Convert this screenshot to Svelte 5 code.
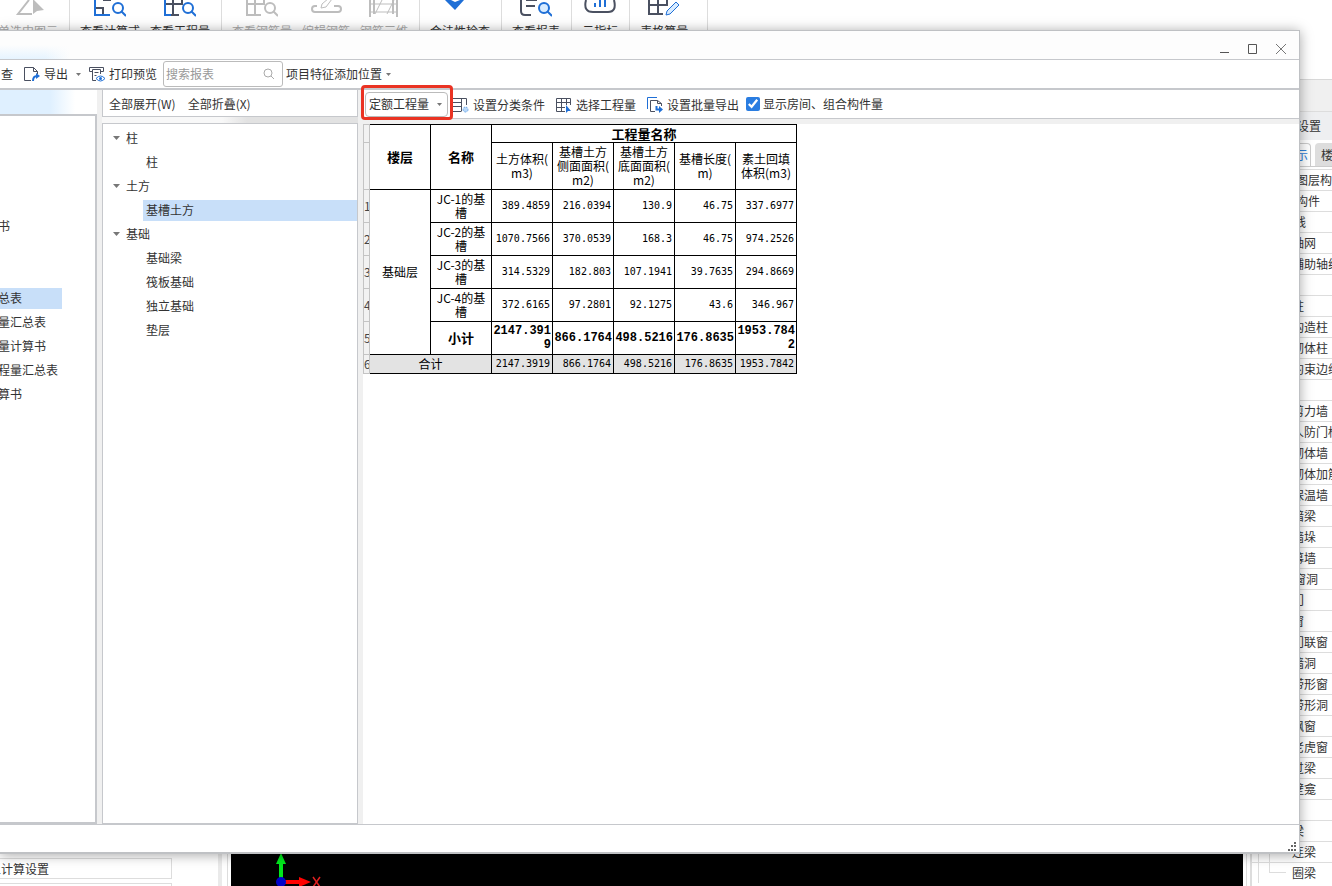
<script lang="ts">
	const ribbon = [
		{ items: [{ label: '单选中图元', icon: 'select', off: true }] },
		{
			items: [
				{ label: '查看计算式', icon: 'formula', off: false },
				{ label: '查看工程量', icon: 'grid', off: false }
			]
		},
		{
			items: [
				{ label: '查看钢筋量', icon: 'grid', off: true },
				{ label: '编辑钢筋', icon: 'edit', off: true },
				{ label: '钢筋三维', icon: 'rebar', off: true }
			]
		},
		{ items: [{ label: '合法性检查', icon: 'check', off: false }] },
		{ items: [{ label: '查看报表', icon: 'report', off: false }] },
		{ items: [{ label: '云指标', icon: 'cloud', off: false }] },
		{ items: [{ label: '表格算量', icon: 'sheet', off: false }] }
	];

	const reports = ['', '', '', '', '书', '', '', '总表', '量汇总表', '量计算书', '程量汇总表', '算书'];

	const tree = [
		{ name: '柱', children: ['柱'] },
		{ name: '土方', children: ['基槽土方'] },
		{ name: '基础', children: ['基础梁', '筏板基础', '独立基础', '垫层'] }
	];

	const layers = [
		{ name: '所有图层构件', level: 0 },
		{ name: '所有构件', level: 0 },
		{ name: '轴线', level: 1 },
		{ name: '轴网', level: 2 },
		{ name: '辅助轴线', level: 2 },
		{ name: '柱', level: 1 },
		{ name: '柱', level: 2 },
		{ name: '构造柱', level: 2 },
		{ name: '砌体柱', level: 2 },
		{ name: '约束边缘', level: 2 },
		{ name: '墙', level: 1 },
		{ name: '剪力墙', level: 2 },
		{ name: '人防门框', level: 2 },
		{ name: '砌体墙', level: 2 },
		{ name: '砌体加筋', level: 2 },
		{ name: '保温墙', level: 2 },
		{ name: '暗梁', level: 2 },
		{ name: '墙垛', level: 2 },
		{ name: '幕墙', level: 2 },
		{ name: '门窗洞', level: 1 },
		{ name: '门', level: 2 },
		{ name: '窗', level: 2 },
		{ name: '门联窗', level: 2 },
		{ name: '墙洞', level: 2 },
		{ name: '带形窗', level: 2 },
		{ name: '带形洞', level: 2 },
		{ name: '飘窗', level: 2 },
		{ name: '老虎窗', level: 2 },
		{ name: '过梁', level: 2 },
		{ name: '壁龛', level: 2 },
		{ name: '梁', level: 1 },
		{ name: '梁', level: 2 },
		{ name: '连梁', level: 2 },
		{ name: '圈梁', level: 2 }
	];

	const columns = [
		['土方体积(', 'm3)'],
		['基槽土方', '侧面面积(', 'm2)'],
		['基槽土方', '底面面积(', 'm2)'],
		['基槽长度(', 'm)'],
		['素土回填', '体积(m3)']
	];

	const rows = [
		{ name: ['JC-1的基', '槽'], values: ['389.4859', '216.0394', '130.9', '46.75', '337.6977'] },
		{ name: ['JC-2的基', '槽'], values: ['1070.7566', '370.0539', '168.3', '46.75', '974.2526'] },
		{ name: ['JC-3的基', '槽'], values: ['314.5329', '182.803', '107.1941', '39.7635', '294.8669'] },
		{ name: ['JC-4的基', '槽'], values: ['372.6165', '97.2801', '92.1275', '43.6', '346.967'] }
	];
	const totals = ['2147.3919', '866.1764', '498.5216', '176.8635', '1953.7842'];

	let selectedReport = $state('总表');
	let selectedNode = $state('基槽土方');
	let showRooms = $state(true);
</script>

{#snippet ribbonIcon(icon: string, off: boolean)}
	{@const dark = off ? '#bdbdbd' : '#4a5060'}
	{@const blue = off ? '#bdbdbd' : '#1f6fd6'}
	<svg width="32" height="18" viewBox="0 0 32 18" fill="none" stroke={dark} stroke-width="2">
		{#if icon === 'select'}
			<path d="M17 0 6 14h14" />
			<path d="M21 0v14l4-3 7-1L21-1z" fill={dark} stroke="none" />
		{:else if icon === 'formula'}
			<path d="M2 8h7v7M9 0h8" />
			<path d="M1 0v15h15" stroke={blue} />
			<circle cx="24" cy="8" r="5" stroke={blue} />
			<path d="m27 11 5 5" stroke={blue} />
		{:else if icon === 'grid'}
			<path d="M1 4h17V0M9 0v15M1 15h14" />
			<path d="M1 0v15h6" stroke={blue} />
			<circle cx="24" cy="8" r="5" stroke={blue} />
			<path d="m27 11 5 5" stroke={blue} />
		{:else if icon === 'edit'}
			<path d="M7 6H5a3 3 0 0 0 0 6h23a3 3 0 0 0 0-6h-4" />
			<path d="m11 8 1-4 7-6M11 8l5-1 6-8" stroke-width="1" />
		{:else if icon === 'rebar'}
			<path d="M2 0v17M6 0v14M25 0v14M29 0v17" />
			<path d="M2 4h27M2 12h27M7 14l7-14M19 14l7-14" stroke-width="1" />
		{:else if icon === 'check'}
			<path d="M1 0h6l4 2 5-2h4L11 10z" fill={blue} stroke="none" />
		{:else if icon === 'report'}
			<path d="M1 0v11q0 4 4 4h6M6 6h9M6 0h11" />
			<circle cx="24" cy="8" r="5" stroke={blue} fill="#d9ecff" />
			<path d="m27 11 5 5" stroke={blue} />
		{:else if icon === 'cloud'}
			<path d="M2 0q-3 12 7 12h15Q33 12 30 0" />
			<path d="M11 3v4M16 0v7M21 0v7" stroke={blue} />
		{:else}
			<path d="M1 0v14h14M10 0v14M1 5h18V0" />
			<path d="m18 15 1-4 9-9 3 3-9 9z" stroke={blue} stroke-width="1" fill="#d9ecff" />
		{/if}
	</svg>
{/snippet}

{#snippet caret()}
	<svg class="caret" width="5" height="3" viewBox="0 0 5 3"><path d="M0 0h5L2.500 3z" fill="#777" /></svg>
{/snippet}

<div class="screen">
	<header class="ribbon">
		{#each ribbon as group}
			<div class="group">
				{#each group.items as item}
					<button class="tool" class:off={item.off} disabled={item.off}>
						{@render ribbonIcon(item.icon, item.off)}
						<span>{item.label}</span>
					</button>
				{/each}
			</div>
		{/each}
	</header>

	<div class="desk">
		<aside class="settings">
			<button>土计算设置</button>
			<button aria-label="更多设置"></button>
		</aside>
		<div class="canvas">
			<svg width="100" height="34" viewBox="0 0 100 34">
				<path d="M50 26V10" stroke="#00e71c" stroke-width="4" />
				<path d="M45 12 50 1l5 11z" fill="#00e71c" />
				<path d="M54 30h16" stroke="#f00" stroke-width="4" />
				<path d="m68 25 12 5-12 5z" fill="#f00" />
				<circle cx="50" cy="30" r="5" fill="#0000c8" />
				<path d="m82 25 7 10M89 25l-7 10" stroke="#e02020" stroke-width="1.500" />
			</svg>
		</div>
		<aside class="layers">
			<div class="band"></div>
			<div class="heading">显示设置</div>
			<div class="tabs">
				<button class="active">图元显示</button>
				<button>楼层显示</button>
			</div>
			<ul>
				{#each layers as layer}
					<li class="level{layer.level}">{layer.name}</li>
				{/each}
			</ul>
		</aside>
	</div>

	<section class="window">
		<div class="titlebar">
			<button aria-label="最小化">
				<svg width="12" height="12" viewBox="0 0 12 12"><path d="M1 9.500h9" stroke="#555" /></svg>
			</button>
			<button aria-label="最大化">
				<svg width="12" height="12" viewBox="0 0 12 12"><path d="M1.500 1.500h8v9h-8z" fill="none" stroke="#555" /></svg>
			</button>
			<button aria-label="关闭">
				<svg width="12" height="12" viewBox="0 0 12 12"><path d="m1 1 10 10M11 1 1 11" stroke="#777" /></svg>
			</button>
		</div>

		<div class="toolbar">
			<button class="cut">查</button>
			<button class="export">
				<svg width="16" height="16" viewBox="0 0 16 16" fill="none">
					<path d="M7 14.500H.5V1.500h9l4 4V8M9.500 1.500v4h4" stroke="#4a5060" />
					<path d="M9 15q0-5 4-5" stroke="#1f6fd6" stroke-width="2" />
					<path d="m12 7 4 3-4 3z" fill="#1f6fd6" />
				</svg>
				导出
				{@render caret()}
			</button>
			<button>
				<svg width="16" height="16" viewBox="0 0 16 16" fill="none">
					<path d="M3 5.500H.5v-4h14v4H12M3.500 14.500v-11h8V8M3.500 14.500H7M5.500 6.500h4M5.500 9.500h2" stroke="#4a5060" />
					<path d="M7 12.500q4.500-5 9 0q-4.500 5-9 0z" fill="#fff" stroke="#1f6fd6" />
					<circle cx="11.500" cy="12.500" r="1.500" fill="#1f6fd6" />
				</svg>
				打印预览
			</button>
			<label class="search">
				<input type="text" placeholder="搜索报表" aria-label="搜索报表" />
				<svg width="12" height="12" viewBox="0 0 12 12" fill="none" stroke="#aaa">
					<circle cx="5" cy="5" r="4" />
					<path d="m8 8 3 3" />
				</svg>
			</label>
			<button class="position">项目特征添加位置 {@render caret()}</button>
		</div>

		<div class="main">
			<nav class="reports">
				<ul>
					{#each reports as report}
						<li>
							{#if report}
								<button class:selected={report === selectedReport} onclick={() => (selectedReport = report)}>{report}</button>
							{/if}
						</li>
					{/each}
				</ul>
			</nav>

			<div class="outline">
				<div class="fold">
					<button>全部展开(W)</button>
					<button>全部折叠(X)</button>
				</div>
				<ul class="tree">
					{#each tree as node}
						<li>
							<button class="parent">
								<svg width="7" height="5" viewBox="0 0 7 5"><path d="M0 0h7L3.500 4z" fill="#777" /></svg>
								{node.name}
							</button>
						</li>
						{#each node.children as child}
							<li>
								<button class="child" class:selected={child === selectedNode} onclick={() => (selectedNode = child)}>{child}</button>
							</li>
						{/each}
					{/each}
				</ul>
			</div>

			<div class="content">
				<div class="options">
					<div class="picker">
						<select aria-label="工程量类型">
							<option>定额工程量</option>
							<option>清单工程量</option>
						</select>
						{@render caret()}
						<span class="mark"></span>
					</div>
					<button>
						<svg width="16" height="16" viewBox="0 0 16 16" fill="none">
							<path d="M0 1.500h13.500V8M0 5.500h8M0 9.500h8M0 14.500h8M8.500 1.500v13" stroke="#4a5060" />
							<circle cx="12.500" cy="12.500" r="2.500" fill="#b8d8fa" stroke="#6fa8e8" stroke-dasharray="2 1" />
						</svg>
						设置分类条件
					</button>
					<button>
						<svg width="16" height="16" viewBox="0 0 16 16" fill="none">
							<path d="M9 14.500H.5v-13h14V8M.5 5.500h14M.5 10.500H9M5.500 1.500v13M10.500 1.500V8" stroke="#4a5060" />
							<path d="M10 8v8l2-2 3 0z" fill="#1f6fd6" />
						</svg>
						选择工程量
					</button>
					<button>
						<svg width="16" height="16" viewBox="0 0 16 16" fill="none">
							<path d="M.5 12V.5H10" stroke="#1f6fd6" />
							<path d="M8 14.500H3.500V3.500h7l4 3V9M10.500 3.500v3h4" stroke="#4a5060" />
							<path d="M9.500 9v3.500H13" stroke="#1f6fd6" stroke-width="2" />
							<path d="m12 9 4 3.500-4 3.500z" fill="#1f6fd6" />
						</svg>
						设置批量导出
					</button>
					<label class="tick">
						<input type="checkbox" bind:checked={showRooms} />
						显示房间、组合构件量
					</label>
				</div>

				<div class="sheet">
					<table>
						<colgroup>
							<col class="narrow" />
							<col span="7" />
						</colgroup>
						<tbody>
							<tr class="top">
								<td class="num"></td>
								<th rowspan="2">楼层</th>
								<th rowspan="2">名称</th>
								<th colspan="5">工程量名称</th>
							</tr>
							<tr class="units">
								<td class="num"></td>
								{#each columns as lines}
									<td>
										{#each lines as line}<div>{line}</div>{/each}
									</td>
								{/each}
							</tr>
							{#each rows as row, i}
								<tr>
									<td class="num">{i + 1}</td>
									{#if i === 0}
										<td rowspan="5">基础层</td>
									{/if}
									<td>
										{#each row.name as line}<div>{line}</div>{/each}
									</td>
									{#each row.values as value}
										<td class="value">{value}</td>
									{/each}
								</tr>
							{/each}
							<tr class="subtotal">
								<td class="num">5</td>
								<th>小计</th>
								{#each totals as value}
									<td class="value">{value}</td>
								{/each}
							</tr>
							<tr class="total">
								<td class="num">6</td>
								<td colspan="2">合计</td>
								{#each totals as value}
									<td class="value">{value}</td>
								{/each}
							</tr>
						</tbody>
					</table>
				</div>
			</div>
		</div>

		<footer class="status">
			<svg width="10" height="10" viewBox="0 0 10 10" fill="#666">
				<path d="M7 0h2v2H7zM4 3h2v2H4zM7 3h2v2H7zM1 7h2v2H1zM4 7h2v2H4zM7 7h2v2H7z" />
			</svg>
		</footer>
	</section>
</div>

<style>
	:global(body) {
		margin: 0;
	}

	.screen {
		position: relative;
		display: flex;
		flex-direction: column;
		height: 100vh;
		overflow: hidden;
		background: #fff;
		color: #333;
		font: 12px/16px 'Noto Sans CJK SC', sans-serif;
	}

	ul {
		list-style: none;
		margin: 0;
		padding: 0;
	}

	button {
		display: flex;
		align-items: center;
		padding: 0;
		border: 0;
		background: none;
		color: inherit;
		font: inherit;
		white-space: nowrap;
	}

	svg {
		flex: none;
	}

	/* Main program, behind the report window */
	.ribbon {
		display: flex;
		flex: none;
		height: 79px;
		border-bottom: 1px solid #d8d8d8;
	}

	.group {
		display: flex;
		gap: 10px;
		padding: 0 11px 0 10px;
		border-right: 1px solid #ddd;
	}

	.group:first-child {
		padding-left: 0;
		margin-left: -2px;
	}

	.group:last-child {
		padding-right: 19px;
	}

	.tool {
		flex-direction: column;
		gap: 5px;
	}

	.tool.off {
		color: #aaa;
	}

	.desk {
		display: flex;
		flex: 1;
		min-height: 0;
	}

	.settings {
		display: flex;
		flex-direction: column;
		justify-content: flex-end;
		gap: 4px;
		width: 218px;
		margin-bottom: -18px;
		border-right: 4px solid #eaeaea;
	}

	.settings button {
		width: 172px;
		height: 21px;
		padding: 0;
		border: 1px solid #ddd;
		border-left: 0;
		text-indent: -11px;
	}

	.canvas {
		display: flex;
		flex: 1;
		align-items: flex-end;
		margin: 0 3px 0 5px;
		border: solid #ddd;
		border-width: 0 1px;
		padding: 0 3px;
		background: #000 content-box;
	}

	.layers {
		display: flex;
		flex-direction: column;
		width: 80px;
		border-left: 2px solid #ddd;
		overflow: hidden;
		white-space: nowrap;
	}

	.band {
		flex: none;
		height: 31px;
		border-bottom: 1px solid #ddd;
		background: #f0f0f0;
	}

	.heading {
		flex: none;
		padding: 6px 21px;
		background: #eeeff1;
	}

	.tabs {
		display: flex;
		flex: none;
		gap: 4px;
		padding-top: 3px;
		border-bottom: 1px solid #ccc;
	}

	.tabs button {
		height: 23px;
		padding-left: 6px;
		border-radius: 4px 4px 0 0;
		background: #ddd;
	}

	.tabs .active {
		padding: 0 2px 0 7px;
		border: 1px solid #ccc;
		border-bottom: 0;
		background: #fff;
		color: #2f80d8;
	}

	.layers ul {
		padding-top: 2px;
		background: linear-gradient(#ddd, #ddd) 6px 0 / 1px 100% no-repeat;
	}

	.layers li {
		position: relative;
		height: 20px;
		border-top: 1px solid #ddd;
		line-height: 20px;
	}

	.level0 {
		padding-left: 20px;
	}

	.level1 {
		padding-left: 30px;
	}

	.level2 {
		padding-left: 40px;
	}

	/* Branch line from the parent down to the item */
	.level2::before {
		position: absolute;
		top: -11px;
		left: 17px;
		width: 16px;
		height: 20px;
		border: solid #ddd;
		border-width: 0 0 1px 1px;
		content: '';
	}

	/* Report window */
	.window {
		position: absolute;
		inset: 30px 32px 32px 0;
		display: flex;
		flex-direction: column;
		box-sizing: border-box;
		border: solid #bfc1c4;
		border-width: 1px 1px 2px 0;
		background: #fff;
		box-shadow: 0 1px 12px rgba(0, 0, 0, 0.35);
	}

	.titlebar {
		display: flex;
		flex: none;
		justify-content: flex-end;
		align-items: center;
		gap: 16px;
		height: 28px;
		padding: 0 12px;
		border-bottom: 1px solid #c6c8cc;
		background: linear-gradient(#fdfdfd 14px, transparent), linear-gradient(90deg, #e6f4ff 45px, #fdfdfd 70px);
	}

	.titlebar button {
		padding-top: 8px;
	}

	.toolbar {
		display: flex;
		flex: none;
		align-items: center;
		height: 28px;
		border-bottom: 2px solid #c6c8cc;
	}

	.toolbar button {
		gap: 4px;
	}

	.toolbar .cut {
		width: 13px;
		justify-content: flex-end;
	}

	.toolbar .export {
		padding: 0 8px 0 11px;
	}

	.export .caret {
		margin-left: 4px;
	}

	.search {
		display: flex;
		align-items: center;
		box-sizing: border-box;
		width: 120px;
		height: 26px;
		margin: 0 3px 0 6px;
		padding: 0 7px 0 2px;
		border: 1px solid #bbb;
		border-radius: 3px;
	}

	.search input {
		flex: 1;
		min-width: 0;
		padding: 0;
		border: 0;
		outline: 0;
		font: inherit;
	}

	.search input::placeholder {
		color: #999;
	}

	.main {
		display: flex;
		flex: 1;
		min-height: 0;
		border-bottom: 1px solid #c6c8cc;
		background: #f0f0f0;
	}

	.reports {
		display: flex;
		width: 97px;
		box-sizing: border-box;
		padding-top: 24px;
		background: linear-gradient(90deg, #dff0ff 50px, #fff 75px);
	}

	.reports ul {
		flex: 1;
		border: solid #c6c8cc;
		border-width: 2px 2px 2px 0;
		background: #fff;
	}

	.reports ul,
	.tree {
		padding-top: 2px;
	}

	li button {
		height: 21px;
	}

	.reports li,
	.tree li {
		display: flex;
		align-items: center;
		height: 24px;
	}

	.reports button {
		margin-left: -2px;
	}

	.reports .selected {
		padding-right: 40px;
	}

	.selected {
		background: #c8dff9;
	}

	.outline {
		display: flex;
		flex-direction: column;
		gap: 6px;
		width: 256px;
		margin: 0 5px;
		background: linear-gradient(90deg, #f8f8f8 120px, #e2e2e2 145px);
	}

	.fold {
		display: flex;
		gap: 12px;
		height: 24px;
		padding: 2px 0 0 6px;
		border: 1px solid #c6c8cc;
		border-top-width: 0;
		background: #fff;
	}

	.tree {
		flex: 1;
		border: 1px solid #c6c8cc;
		background: #fff;
	}

	.tree .parent {
		gap: 6px;
		padding-left: 10px;
	}

	.tree .child {
		flex: 1;
		margin-left: 40px;
		padding-left: 3px;
	}

	.content {
		display: flex;
		flex: 1;
		flex-direction: column;
		gap: 5px;
		min-width: 0;
	}

	.options {
		display: flex;
		align-items: center;
		gap: 11px;
		height: 28px;
		padding-left: 2px;
		border-bottom: 1px solid #c6c8cc;
		background: #fff;
	}

	.options > button {
		gap: 4px;
		padding-top: 2px;
	}

	.picker {
		position: relative;
		display: flex;
		align-items: center;
		margin-right: -6px;
	}

	.picker select {
		width: 83px;
		height: 25px;
		padding: 0 3px;
		border: 1px solid #bbb;
		border-radius: 4px;
		appearance: none;
		background: #fff;
		color: inherit;
		font: inherit;
	}

	.picker .caret {
		position: absolute;
		right: 6px;
	}

	/* Red frame that points out the quantity type */
	.mark {
		position: absolute;
		inset: -7px -5px -3px -4px;
		border: 3px solid #ea3323;
		border-radius: 4px;
		pointer-events: none;
	}

	.tick {
		display: flex;
		align-items: center;
		gap: 3px;
		margin-left: -4px;
	}

	.tick input {
		width: 14px;
		height: 14px;
		margin: 0;
		accent-color: #2a7de1;
	}

	.sheet {
		flex: 1;
		background: #fff;
	}

	table {
		width: 434px;
		table-layout: fixed;
		border-spacing: 0;
		color: #000;
		line-height: 14px;
		text-align: center;
	}

	col {
		width: 61px;
	}

	.narrow {
		width: 7px;
	}

	td,
	th {
		box-sizing: border-box;
		height: 33px;
		padding: 0;
		border: solid #000;
		border-width: 0 1px 1px 0;
	}

	th {
		font-size: 13px;
	}

	.top > * {
		height: 19px;
		border-top-width: 1px;
	}

	.units td {
		height: 47px;
	}

	.value {
		padding: 0 2px 0 0;
		font-family: 'DejaVu Sans Mono', monospace;
		font-size: 10px;
		text-align: right;
		word-break: break-all;
	}

	.subtotal .value {
		padding: 0 1px 0 0;
		font-family: 'Liberation Mono', monospace;
		font-size: 12px;
		font-weight: bold;
	}

	.total td {
		height: 19px;
		background: #e3e3e3;
	}

	td.num,
	.total td.num {
		border-color: #c4c4c4;
		border-left-width: 1px;
		background: #f2f2f2;
		color: #444;
		overflow: hidden;
	}

	.status {
		display: flex;
		flex: none;
		justify-content: flex-end;
		align-items: flex-end;
		height: 27px;
		padding-right: 2px;
	}
</style>
